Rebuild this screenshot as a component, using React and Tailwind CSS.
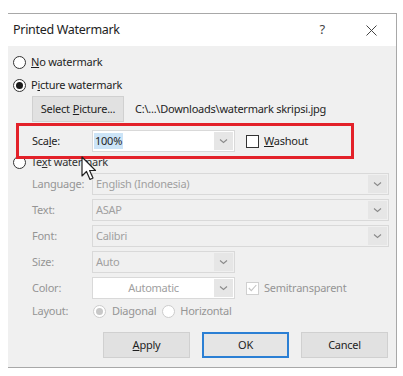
import React from "react";

function Radio({ checked, disabled, dotDisabled }) {
  if (disabled) {
    return (
      <span className="w-[13px] h-[13px] rounded-full border border-[#cccccc] bg-white flex items-center justify-center shrink-0">
        {dotDisabled && <span className="w-[7px] h-[7px] rounded-full bg-[#c8c8c8]" />}
      </span>
    );
  }
  return (
    <span className="w-[13px] h-[13px] rounded-full border border-[#333333] bg-white flex items-center justify-center shrink-0">
      {checked && <span className="w-[7px] h-[7px] rounded-full bg-[#1a1a1a]" />}
    </span>
  );
}

function Chevron({ color = "#8a8a8a" }) {
  return (
    <svg width="9" height="6" viewBox="0 0 9 6">
      <path d="M1 1.5 L4.5 4.5 L8 1.5" fill="none" stroke={color} strokeWidth="1.1" />
    </svg>
  );
}

function Dropdown({ width, text, white, center }) {
  return (
    <div
      className={`h-[22px] flex border border-[#d9d9d9] ${white ? "bg-white" : "bg-[#f0f0f0]"}`}
      style={{ width }}
    >
      <div className={`flex-1 flex items-center text-[#a0a0a0] ${center ? "justify-center" : "pl-[3px]"}`}>{text}</div>
      <div className="w-[19px] my-[1px] mr-[1px] bg-[#e6e6e6] flex items-center justify-center">
        <Chevron />
      </div>
    </div>
  );
}

function Row({ label, children }) {
  return (
    <div className="flex items-center ml-[24px] h-[22px]">
      <div className="w-[60px] text-[#959595]">{label}</div>
      {children}
    </div>
  );
}

export default function App() {
  return (
    <div className="w-[403px] h-[376px] bg-white pt-[13px] pl-[8px] font-['Noto_Sans',sans-serif] text-[11px] tracking-[-0.25px] text-[#1e1e1e] relative overflow-hidden">
      <div className="w-[389px] h-[355px] border-t border-r border-b border-[#a8a8a8] flex flex-col">
        <div className="h-[32px] bg-white flex items-center pl-[5px]">
          <span className="text-[12.5px] tracking-[-0.3px] text-[#222]">Printed Watermark</span>
          <span className="ml-auto mr-[41px] text-[13px] text-[#444]">?</span>
          <svg width="11" height="11" viewBox="0 0 11 11" className="mr-[19px]">
            <path d="M0.5 0.5 L10.5 10.5 M10.5 0.5 L0.5 10.5" stroke="#444" strokeWidth="1" />
          </svg>
        </div>
        <div className="flex-1 bg-[#f0f0f0] flex flex-col pt-[6px]">
          <div className="h-[20px] flex items-center ml-[5px] gap-[5px]">
            <Radio />
            <span><span className="underline">N</span>o watermark</span>
          </div>
          <div className="h-[20px] flex items-center ml-[5px] gap-[5px] mt-[3px]">
            <Radio checked />
            <span>P<span className="underline">i</span>cture watermark</span>
          </div>
          <div className="h-[26px] flex items-center ml-[24px] mt-[1px]">
            <div className="w-[92px] h-[26px] bg-[#e1e1e1] border border-[#d0d0d0] flex items-center justify-center">
              Select <span className="underline ml-[3px]">P</span>icture...
            </div>
            <span className="ml-[11px]">C:\...\Downloads\watermark skripsi.jpg</span>
          </div>
          <div className="ml-[8px] mt-[1px] w-[338px] h-[36px] border-[3px] border-[#e32129] flex items-center relative z-10">
            <div className="ml-[13px] w-[60px]">Sca<span className="underline">l</span>e:</div>
            <div className="w-[143px] h-[22px] bg-white border border-[#d9d9d9] flex">
              <div className="flex-1 flex items-center pl-[1px]">
                <span className="bg-[#cce4f7] px-[1px]">100%</span>
              </div>
              <div className="w-[19px] my-[1px] mr-[1px] bg-[#e6e6e6] flex items-center justify-center">
                <Chevron />
              </div>
            </div>
            <span className="ml-[11px] w-[13px] h-[13px] border border-[#333] bg-white" />
            <span className="ml-[5px]"><span className="underline">W</span>ashout</span>
          </div>
          <div className="h-[20px] flex items-center ml-[5px] gap-[5px] mt-[-7px]">
            <Radio />
            <span className="text-[#333]">Te<span className="underline">x</span>t watermark</span>
          </div>
          <div className="mt-[1px] flex flex-col gap-[4px]">
            <Row label="Language:"><Dropdown width={297} text="English (Indonesia)" /></Row>
            <Row label="Text:"><Dropdown width={297} text="ASAP" /></Row>
            <Row label="Font:"><Dropdown width={297} text="Calibri" /></Row>
            <Row label="Size:"><Dropdown width={143} text="Auto" /></Row>
            <Row label="Color:">
              <Dropdown width={143} text="Automatic" white center />
              <span className="ml-[11px] w-[13px] h-[13px] border border-[#d0d0d0] bg-white flex items-center justify-center">
                <svg width="9" height="8" viewBox="0 0 9 8">
                  <path d="M0.8 4 L3.3 6.6 L8.3 1" fill="none" stroke="#c4c4c4" strokeWidth="1.1" />
                </svg>
              </span>
              <span className="ml-[5px] text-[#959595]">Semitransparent</span>
            </Row>
          </div>
          <div className="h-[20px] flex items-center ml-[24px] mt-[2px] text-[#959595]">
            <div className="w-[60px]">Layout:</div>
            <span className="ml-[1px]"><Radio disabled dotDisabled /></span>
            <span className="ml-[6px]">Diagonal</span>
            <span className="ml-[6px]"><Radio disabled /></span>
            <span className="ml-[5px]">Horizontal</span>
          </div>
          <div className="flex mt-[11px] ml-[95px] gap-[12px]">
            <div className="w-[87px] h-[26px] bg-[#e1e1e1] border border-[#d0d0d0] flex items-center justify-center">
              <span><span className="underline">A</span>pply</span>
            </div>
            <div className="w-[87px] h-[26px] bg-[#e5e5e5] border-2 border-[#2b7fd4] flex items-center justify-center">
              OK
            </div>
            <div className="w-[87px] h-[26px] bg-[#e1e1e1] border border-[#d0d0d0] flex items-center justify-center">
              Cancel
            </div>
          </div>
        </div>
      </div>
      <svg className="absolute left-[81px] top-[156px] z-20" width="17" height="27" viewBox="0 0 17 27">
        <path d="M1 1 L1 20 L5.5 15.5 L9 23.5 L12 22 L8.6 14.5 L14.5 14.5 Z" fill="white" stroke="#222" strokeWidth="1.2" strokeLinejoin="round" />
      </svg>
    </div>
  );
}
